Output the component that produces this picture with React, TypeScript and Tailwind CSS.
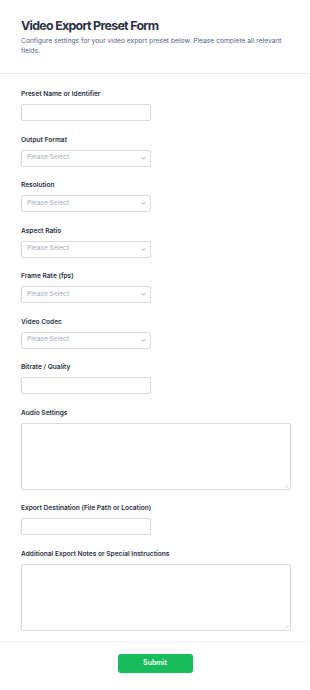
import { ChevronDown } from "lucide-react";

const selectFields = [
  "Output Format",
  "Resolution",
  "Aspect Ratio",
  "Frame Rate (fps)",
  "Video Codec",
];

const Label = ({ text }: { text: string }) => (
  <label className="block text-[6.6px] leading-[10px] font-semibold text-[#2c3345] mb-[5px]">
    {text}
  </label>
);

const TextInput = ({ label }: { label: string }) => (
  <div>
    <Label text={label} />
    <input
      type="text"
      className="block w-[130px] h-[17px] rounded-[2px] border border-[#d8dbe4] bg-white px-[5px] text-[7px] outline-none"
    />
  </div>
);

const SelectInput = ({ label }: { label: string }) => (
  <div>
    <Label text={label} />
    <div className="relative w-[130px] h-[17px]">
      <select
        defaultValue=""
        className="block w-full h-full appearance-none rounded-[2px] border border-[#d8dbe4] bg-white pl-[5px] text-[6.6px] text-[#a2abbd] outline-none"
      >
        <option value="" disabled>
          Please Select
        </option>
      </select>
      <ChevronDown
        strokeWidth={3}
        className="absolute right-[5px] top-[6px] w-[5px] h-[5px] text-[#57647e] pointer-events-none"
      />
    </div>
  </div>
);

const TextArea = ({ label }: { label: string }) => (
  <div>
    <Label text={label} />
    <div className="relative">
      <textarea className="block w-full h-[67px] resize-none rounded-[2px] border border-[#d8dbe4] bg-white p-[5px] text-[7px] outline-none" />
      {/* resize grip */}
      <svg
        viewBox="0 0 6 6"
        className="absolute right-[2px] bottom-[2px] w-[5px] h-[5px] pointer-events-none"
      >
        <path d="M5.5 1 L1 5.5 M5.5 3.5 L3.5 5.5" stroke="#c4c9d4" strokeWidth="0.8" />
      </svg>
    </div>
  </div>
);

const App = () => {
  return (
    <div className="w-[310px] min-h-[690px] bg-white font-['Inter',sans-serif]">
      {/* Header */}
      <div className="pl-[21px] pr-[19px] pt-[17px] pb-[17px] border-b border-[#e6e8ee]">
        <h1 className="text-[12.4px] leading-[17px] font-bold tracking-[-0.7px] text-[#2c3345]">
          Video Export Preset Form
        </h1>
        <p className="mt-[2px] text-[6.7px] leading-[10px] text-[#57647e]">
          Configure settings for your video export preset below. Please complete all relevant
          fields.
        </p>
      </div>

      {/* Fields */}
      <form className="pl-[21px] pr-[19px] pt-[15px] pb-[10px] flex flex-col gap-[13.5px] border-b border-[#eef0f4]">
        <TextInput label="Preset Name or Identifier" />
        {selectFields.map((f) => (
          <SelectInput key={f} label={f} />
        ))}
        <TextInput label="Bitrate / Quality" />
        <TextArea label="Audio Settings" />
        <TextInput label="Export Destination (File Path or Location)" />
        <TextArea label="Additional Export Notes or Special Instructions" />
      </form>

      {/* Footer */}
      <div className="flex justify-center pt-[12px] pb-[17px]">
        <button
          type="button"
          className="w-[75px] h-[19px] rounded-[3px] bg-[#18bd5b] text-white text-[7px] font-semibold"
        >
          Submit
        </button>
      </div>
    </div>
  );
};

export default App;
